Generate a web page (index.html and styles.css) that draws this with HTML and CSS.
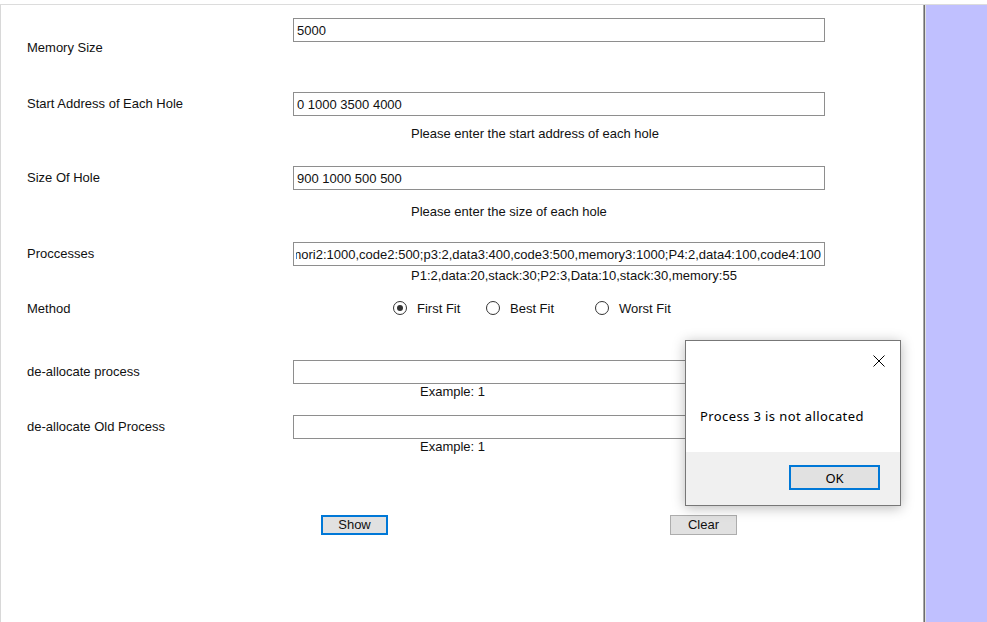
FILE: index.html
```html
<!DOCTYPE html>
<html>
<head>
<meta charset="utf-8">
<title>Memory Allocation</title>
<link rel="stylesheet" href="styles.css">
</head>
<body>
<div class="window">
  <div class="form">
    <div class="row">
      <label class="lbl lbl-first">Memory Size</label>
      <div class="col">
        <input class="field" type="text" value="5000">
      </div>
    </div>
    <div class="row row-2">
      <label class="lbl">Start Address of Each Hole</label>
      <div class="col">
        <input class="field" type="text" value="0 1000 3500 4000">
        <div class="hint hint-2">Please enter the start address of each hole</div>
      </div>
    </div>
    <div class="row row-3">
      <label class="lbl">Size Of Hole</label>
      <div class="col">
        <input class="field" type="text" value="900 1000 500 500">
        <div class="hint hint-3">Please enter the size of each hole</div>
      </div>
    </div>
    <div class="row row-4">
      <label class="lbl">Proccesses</label>
      <div class="col">
        <input class="field field-end" type="text" dir="rtl" value="P1:2,data1:200,code1:300,memory1:500;P2:3,data2:300,memori2:1000,code2:500;p3:2,data3:400,code3:500,memory3:1000;P4:2,data4:100,code4:100">
        <div class="hint hint-4">P1:2,data:20,stack:30;P2:3,Data:10,stack:30,memory:55</div>
      </div>
    </div>
    <div class="row row-5">
      <label class="lbl lbl-plain">Method</label>
      <div class="col">
        <div class="radios">
          <label class="radio"><span class="dot checked"></span>First Fit</label>
          <label class="radio"><span class="dot"></span>Best Fit</label>
          <label class="radio"><span class="dot"></span>Worst Fit</label>
        </div>
      </div>
    </div>
    <div class="row row-6">
      <label class="lbl">de-allocate process</label>
      <div class="col">
        <input class="field" type="text" value="">
        <div class="example">Example: 1</div>
      </div>
    </div>
    <div class="row row-7">
      <label class="lbl">de-allocate Old Process</label>
      <div class="col">
        <input class="field" type="text" value="">
        <div class="example">Example: 1</div>
      </div>
    </div>
    <div class="buttons">
      <button class="btn btn-focus">Show</button>
      <button class="btn">Clear</button>
    </div>
  </div>
  <div class="splitter"></div>
  <div class="side"></div>

  <div class="dialog">
    <div class="dialog-body">
      <div class="dialog-top">
        <svg class="close" width="12" height="12" viewBox="0 0 12 12"><path d="M0.5 0.5 L11.5 11.5 M11.5 0.5 L0.5 11.5" stroke="#000" stroke-width="1" fill="none"/></svg>
      </div>
      <div class="msg">Process 3 is not allocated</div>
    </div>
    <div class="dialog-foot">
      <button class="ok">OK</button>
    </div>
  </div>
</div>
</body>
</html>
```
FILE: styles.css
```css
html, body {
  margin: 0;
  padding: 0;
  background: #fff;
  height: 100%;
  overflow: hidden;
}

body {
  font-family: "Liberation Sans", Arial, sans-serif;
  font-size: 13px;
  color: #111;
}

.window {
  position: relative;
  margin-top: 4px;
  border-top: 1px solid #dcdcdc;
  display: flex;
  height: 617px;
}

.form {
  width: 923px;
  border-left: 1px solid #d8d8d8;
  padding-top: 13px;
  box-sizing: border-box;
}

.row {
  display: grid;
  grid-template-columns: 266px 532px;
  padding-left: 26px;
  align-items: start;
}

.lbl {
  line-height: 16px;
  padding-top: 4px;
  white-space: nowrap;
}

.lbl-first { padding-top: 22px; }
.lbl-plain { padding-top: 0; }

.row-2 { margin-top: 36px; }
.row-3 { margin-top: 24px; }
.row-4 { margin-top: 22px; }
.row-5 { margin-top: 17px; }
.row-6 { margin-top: 43px; }
.row-7 { margin-top: 15px; }

.col {
  display: flex;
  flex-direction: column;
}

.field {
  box-sizing: border-box;
  width: 532px;
  height: 24px;
  margin: 0;
  border: 1px solid #8e8e8e;
  padding: 0 2px 0 3px;
  font-family: "Liberation Sans", Arial, sans-serif;
  font-size: 13px;
  color: #111;
  background: #fff;
  outline: none;
}

.field-end {
  padding: 0 3px 0 2px;
  text-align: right;
}

.hint {
  line-height: 16px;
  padding-left: 118px;
  white-space: nowrap;
}

.hint-2 { margin-top: 10px; }
.hint-3 { margin-top: 14px; }
.hint-4 { margin-top: 2px; }

.example {
  line-height: 16px;
  padding-left: 127px;
}

.radios {
  display: grid;
  grid-template-columns: 93px 109px auto;
  padding-left: 100px;
  line-height: 16px;
}

.radio {
  display: flex;
  align-items: center;
  gap: 10px;
  white-space: nowrap;
}

.dot {
  box-sizing: border-box;
  width: 14px;
  height: 14px;
  border: 1px solid #333;
  border-radius: 50%;
  background: #fff;
  display: flex;
  align-items: center;
  justify-content: center;
  margin-top: -2px;
}

.dot.checked::after {
  content: "";
  width: 6px;
  height: 6px;
  border-radius: 50%;
  background: #333;
}

.buttons {
  display: flex;
  gap: 282px;
  padding-left: 320px;
  margin-top: 60px;
}

.btn {
  box-sizing: border-box;
  width: 67px;
  height: 20px;
  margin: 0;
  padding: 0;
  border: 1px solid #adadad;
  background: #e1e1e1;
  font-family: "Liberation Sans", Arial, sans-serif;
  font-size: 13px;
  color: #111;
  line-height: 18px;
}

.btn-focus {
  border: 2px solid #0078d7;
  line-height: 16px;
}

.splitter {
  width: 3px;
  background: linear-gradient(to right, #a8a8a8 0, #a8a8a8 1px, #6d6d6d 1px, #6d6d6d 2px, #e0e0e0 2px);
}

.side {
  flex: 1;
  background: #c0c0ff;
}

.dialog {
  position: absolute;
  left: 685px;
  top: 335px;
  width: 216px;
  height: 166px;
  box-sizing: border-box;
  border: 1px solid #777;
  background: #fff;
  display: flex;
  flex-direction: column;
  box-shadow: 0 2px 12px rgba(0, 0, 0, 0.28);
  font-family: "Noto Sans", "Open Sans", sans-serif;
  font-size: 13px;
  color: #000;
}

.dialog-body {
  flex: 1;
  display: flex;
  flex-direction: column;
}

.dialog-top {
  display: flex;
  justify-content: flex-end;
  padding: 14px 15px 0 0;
}

.msg {
  margin-top: 41px;
  padding-left: 14px;
  line-height: 16px;
  white-space: nowrap;
  letter-spacing: 0.4px;
}

.dialog-foot {
  height: 53px;
  background: #f0f0f0;
  display: flex;
  justify-content: flex-end;
  align-items: flex-start;
  padding: 13px 20px 0 0;
  box-sizing: border-box;
}

.ok {
  box-sizing: border-box;
  width: 91px;
  height: 25px;
  margin: 0;
  border: 2px solid #0078d7;
  background: #e1e1e1;
  font-family: "Noto Sans", "Open Sans", sans-serif;
  font-size: 13px;
  color: #000;
  padding: 0;
}
```
